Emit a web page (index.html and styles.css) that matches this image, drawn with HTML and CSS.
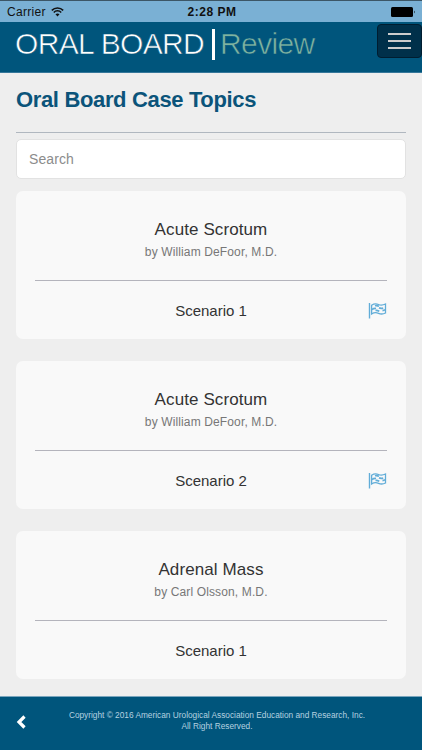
FILE: index.html
```html
<!DOCTYPE html>
<html lang="en">
<head>
  <meta charset="UTF-8">
  <meta name="viewport" content="width=device-width, initial-scale=1.0">
  <title>Oral Board Review</title>
  <link rel="stylesheet" href="styles.css">
</head>
<body>
  <!-- flag icon shared by the cards -->
  <svg class="sprite" width="0" height="0">
    <symbol id="flag" viewBox="0 0 19 17">
      <path d="M1.5 1v15.500" stroke-width="1.400" fill="none"/>
      <path d="M3.600 3.200C6 1.600 8 1.400 10.500 2.500s4.500 .7 7-.5v9c-3 1.500-4.700 1.300-7 .3S6 10.400 3.600 12z" stroke-width="1.300" fill="none"/>
      <path d="M7 3.800c1.400-.4 2.500-.2 4 .5M11 5.900c1.600 .6 2.800 .5 4.200 .2M4 7.400c1.500-.9 2.600-1.100 4-.9M7.500 8.500c1.400-.2 2.400 .1 3.800 .7M14.500 8.600c1.200-.1 2-.4 3-.8" stroke-width="1.700" fill="none"/>
    </symbol>
  </svg>

  <div class="status-bar">
    <div class="carrier">
      <span>Carrier</span>
      <svg width="13" height="10" viewBox="0 0 13 10">
        <path d="M.8 3.400a8 8 0 0 1 11.400 0M2.800 5.500a5 5 0 0 1 7.400 0" fill="none" stroke="#111" stroke-width="1.500"/>
        <path d="M4.500 7.300a3 3 0 0 1 4 0L6.500 9.500z" fill="#111"/>
      </svg>
    </div>
    <div class="time">2:28 PM</div>
    <div class="battery">
      <svg width="25" height="10" viewBox="0 0 25 10">
        <rect x="0" y="0" width="22" height="10" rx="1.500"/>
        <path d="M23 3.500q1.500 1.500 0 3z"/>
      </svg>
    </div>
  </div>

  <header class="navbar">
    <div class="brand">
      <span class="brand-name">ORAL BOARD</span>
      <span class="brand-bar"></span>
      <span class="brand-sub">Review</span>
    </div>
    <button class="menu-btn" aria-label="Menu">
      <span></span>
      <span></span>
      <span></span>
    </button>
  </header>

  <main class="content">
    <h1>Oral Board Case Topics</h1>
    <input class="search" type="text" placeholder="Search">

    <div class="card">
      <h2>Acute Scrotum</h2>
      <p class="author">by William DeFoor, M.D.</p>
      <div class="scenario">
        <span>Scenario 1</span>
        <svg class="flag"><use href="#flag"/></svg>
      </div>
    </div>

    <div class="card">
      <h2>Acute Scrotum</h2>
      <p class="author">by William DeFoor, M.D.</p>
      <div class="scenario">
        <span>Scenario 2</span>
        <svg class="flag"><use href="#flag"/></svg>
      </div>
    </div>

    <div class="card">
      <h2>Adrenal Mass</h2>
      <p class="author">by Carl Olsson, M.D.</p>
      <div class="scenario">
        <span>Scenario 1</span>
      </div>
    </div>
  </main>

  <footer class="footer">
    <svg class="back" width="10" height="14" viewBox="0 0 10 14">
      <path d="M8.500 1.500L3 7L8.500 12.500" fill="none" stroke="#fff" stroke-width="3.200"/>
    </svg>
    <p>Copyright © 2016 American Urological Association Education and Research, Inc.<br>All Right Reserved.</p>
  </footer>
</body>
</html>
```
FILE: styles.css
```css
* {
  box-sizing: border-box;
}
body {
  margin: 0;
  height: 750px;
  display: flex;
  flex-direction: column;
  overflow: hidden;
  font-family: "Liberation Sans", Arial, sans-serif;
  background-color: #eee;
  color: #333;
}
.sprite {
  position: absolute;
}
.status-bar {
  height: 22px;
  flex: none;
  display: grid;
  grid-template-columns: 1fr auto 1fr;
  align-items: center;
  padding: 0 6px 0 7px;
  border-top: 1px solid #3c5666;
  background-color: #7ab0d4;
  color: #111;
  font-size: 12px;
}
.carrier {
  display: flex;
  align-items: center;
  gap: 5px;
  letter-spacing: 0.3px;
}
.time {
  padding-left: 1px;
  font-weight: bold;
  letter-spacing: 0.5px;
}
.battery {
  display: flex;
  justify-content: flex-end;
}
.navbar {
  height: 51px;
  flex: none;
  display: flex;
  justify-content: space-between;
  align-items: flex-start;
  padding: 2px 0 0 15px;
  background-color: #00557c;
  border-bottom: 1px solid #35779a;
}
.brand {
  display: flex;
  align-items: center;
  height: 40px;
  font-size: 30px;
  letter-spacing: -0.65px;
  -webkit-text-stroke: 0.6px #00557c;
}
.brand-name {
  color: #fff;
}
.brand-bar {
  width: 3px;
  height: 31px;
  margin: 0 5px 0 8px;
  background-color: #fff;
}
.brand-sub {
  color: #7fb3a0;
}
.menu-btn {
  width: 45px;
  height: 34px;
  display: flex;
  flex-direction: column;
  justify-content: center;
  align-items: center;
  gap: 5px;
  padding: 0;
  border: 1px solid #001d30;
  border-radius: 4px;
  background-color: #00304a;
}
.menu-btn span {
  width: 23px;
  height: 2px;
  background-color: #ccc;
}
.content {
  flex: 1;
  min-height: 0;
  padding: 0 16px;
}
h1 {
  height: 60px;
  margin: 0 0 6px;
  padding-top: 13px;
  border-bottom: 1px solid #b0b7bf;
  color: #0b547a;
  font-size: 22px;
  letter-spacing: -0.35px;
  line-height: 28px;
}
.search {
  display: block;
  width: 100%;
  height: 40px;
  margin-bottom: 12px;
  padding: 0 12px;
  border: 1px solid #e2e2e2;
  border-radius: 5px;
  background-color: #fff;
  font-family: inherit;
  font-size: 14px;
  letter-spacing: 0.1px;
}
.search::placeholder {
  color: #8c8c8c;
}
.card {
  height: 148px;
  margin-bottom: 22px;
  padding: 28px 19px 0;
  border-radius: 7px;
  background-color: #f9f9f9;
  text-align: center;
}
.card h2 {
  margin: 0;
  font-size: 17px;
  font-weight: normal;
  letter-spacing: 0.1px;
  line-height: 22px;
}
.author {
  height: 40px;
  margin: 0;
  border-bottom: 1px solid #b4b4bc;
  color: #777;
  font-size: 12px;
  letter-spacing: 0.13px;
  line-height: 22px;
}
.scenario {
  display: grid;
  grid-template-columns: 1fr auto 1fr;
  align-items: center;
  height: 59px;
  font-size: 15px;
}
.scenario span {
  grid-column: 2;
}
.flag {
  justify-self: end;
  width: 19px;
  height: 17px;
  fill: #62add8;
  stroke: #62add8;
}
.footer {
  height: 54px;
  flex: none;
  display: flex;
  padding: 13px 56px 0 16px;
  border-top: 1px solid #7aa5bd;
  background-color: #00557c;
}
.back {
  flex: none;
  margin-top: 5px;
}
.footer p {
  flex: 1;
  margin: 0 0 0 42px;
  color: #b5d2e0;
  font-size: 8.3px;
  line-height: 11px;
  text-align: center;
  white-space: nowrap;
}
```
